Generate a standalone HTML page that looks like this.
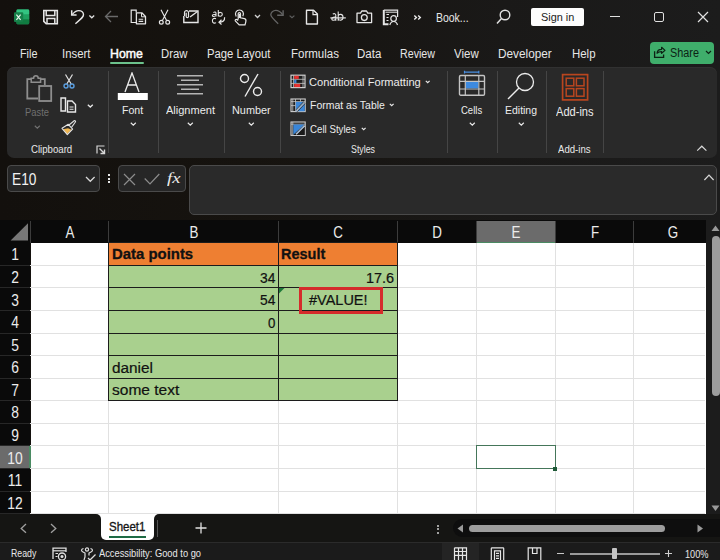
<!DOCTYPE html>
<html><head><meta charset="utf-8"><style>
html,body{margin:0;padding:0;}
body{width:720px;height:560px;overflow:hidden;position:relative;background:linear-gradient(to right,#13100d 0%,#16130f 35%,#1a1918 70%,#1c1c1c 100%);font-family:"Liberation Sans", sans-serif;}
.t{position:absolute;line-height:1;white-space:nowrap;}
.r{position:absolute;}
</style></head><body>
<svg class="r" style="left:13px;top:9px;" width="17" height="16" viewBox="0 0 17 16">
<rect x="3.5" y="0.5" width="12.7" height="14.8" rx="1.2" fill="#21a366"/>
<rect x="3.5" y="0.5" width="12.7" height="5" rx="1.2" fill="#33c481"/>
<rect x="9" y="5.5" width="7.2" height="4.8" fill="#1fa05f"/>
<rect x="3.5" y="10.3" width="12.7" height="5" rx="1.2" fill="#107c41"/>
<rect x="1" y="3.3" width="9.2" height="9.7" rx="1" fill="#17804a"/>
<path d="M3.4 5.6 L7.6 10.8 M7.6 5.6 L3.4 10.8" stroke="#e8f5ec" stroke-width="1.2"/>
</svg>
<svg class="r" style="left:42px;top:9px;" width="17" height="17" viewBox="0 0 17 17"><path d="M1.8 1.5 H15.3 V14.8 H4.2 L1.8 12.4 Z" fill="none" stroke="#e6e6e6" stroke-width="1.6"/>
<path d="M4.2 1.5 V6.6 H12.8 V1.5" fill="none" stroke="#e6e6e6" stroke-width="1.5"/>
<path d="M5 14.8 V9.6 H12.8 V14.8" fill="none" stroke="#e6e6e6" stroke-width="1.5"/></svg>
<svg class="r" style="left:66px;top:6px;" width="34" height="22" viewBox="0 0 34 22"><path d="M5.7 4.2 V9 H10.6" fill="none" stroke="#e6e6e6" stroke-width="1.5"/>
<path d="M6.2 8.6 C8.5 5.6 10.5 4.6 12.7 4.6 C15.5 4.6 17.5 6.6 17.5 8.8 C17.5 10.6 16.5 11.8 9.4 17.7" fill="none" stroke="#e6e6e6" stroke-width="1.4"/>
<path d="M23.4 9.6 L25.8 11.8 L28.2 9.6" fill="none" stroke="#e0e0e0" stroke-width="1.3"/></svg>
<svg class="r" style="left:104px;top:10px;" width="15" height="13" viewBox="0 0 15 13"><path d="M14 6.5 H1.5 M7 1 L1.5 6.5 L7 12" fill="none" stroke="#6a6a6a" stroke-width="1.3"/></svg>
<svg class="r" style="left:130px;top:9px;" width="17" height="17" viewBox="0 0 17 17"><path d="M6.2 13.5 H1.2 V1.2 H6.2 V3.5" fill="none" stroke="#e6e6e6" stroke-width="1.2"/>
<path d="M6.4 3.8 H11.8 L15.5 7.5 V14.8 H6.4 Z" fill="none" stroke="#e6e6e6" stroke-width="1.3" stroke-linejoin="round"/>
<path d="M11.5 4 V7.8 H15.3" fill="none" stroke="#e6e6e6" stroke-width="1"/>
<path d="M8.6 10.3 H13.2 M8.6 12.4 H13.2" stroke="#e6e6e6" stroke-width="1.1"/></svg>
<svg class="r" style="left:158px;top:9px;" width="13" height="16" viewBox="0 0 13 16"><path d="M3 0.8 L8.6 11.6 M10 0.8 L4.4 11.6" stroke="#e6e6e6" stroke-width="1.15"/>
<circle cx="3.3" cy="13.3" r="1.9" fill="none" stroke="#e6e6e6" stroke-width="1.2"/>
<circle cx="9.7" cy="13.3" r="1.9" fill="none" stroke="#e6e6e6" stroke-width="1.2"/></svg>
<svg class="r" style="left:182px;top:9px;" width="18" height="15" viewBox="0 0 18 15"><path d="M7 2 H16 V13.5 H1.8 V7" fill="none" stroke="#e6e6e6" stroke-width="1.4"/>
<path d="M8 8 L15.5 2.5" stroke="#e6e6e6" stroke-width="1.3"/>
<path d="M2.5 7 V3.5 C2.5 1 6.5 1 6.5 3.5 V7.5 C6.5 9 4.2 9 4.2 7.5 V3.8" fill="none" stroke="#e6e6e6" stroke-width="1.2"/></svg>
<svg class="r" style="left:210px;top:9px;" width="17" height="16" viewBox="0 0 17 16"><path d="M3.4 3.6 C4.6 2.6 6 3 6 4.3 V7.5 M6 5.5 C3 5.2 2.2 6 2.4 6.8 C2.6 7.8 4.8 7.8 6 6.5" fill="none" stroke="#e6e6e6" stroke-width="1.1"/>
<path d="M8.3 1 V7.5 M8.3 4.8 C8.8 3 12.3 2.8 12.3 5.2 C12.3 7.8 8.8 7.8 8.3 5.8" fill="none" stroke="#e6e6e6" stroke-width="1.1"/>
<path d="M6 9.8 C4.5 8.8 2.4 9.6 2.4 11.8 C2.4 14 4.5 14.6 6 13.6" fill="none" stroke="#e6e6e6" stroke-width="1.1"/>
<path d="M14.6 8.2 C14.8 11.5 13 13.2 9.2 13.2 M11.5 10.8 L9 13.2 L11.5 15.5" fill="none" stroke="#e6e6e6" stroke-width="1.2"/></svg>
<svg class="r" style="left:233px;top:9px;" width="15" height="17" viewBox="0 0 15 17"><path d="M3.2 7.5 C1.2 4 3.5 1 6.5 1 C9.5 1 11.5 4 9.8 7.2" fill="none" stroke="#e6e6e6" stroke-width="1.2"/>
<path d="M5.2 10.5 V4.6 C5.2 3.4 7.5 3.4 7.5 4.6 V8.8 L11.5 9.6 C13 10 13.2 11.2 12.8 12.8 L12 15.8 H6.2 L2.3 11.8 C1.8 11 2.8 10 3.8 10.6 L5.2 11.6" fill="none" stroke="#e6e6e6" stroke-width="1.2"/>
<path d="M6.4 5 V9" stroke="#e6e6e6" stroke-width="1.6"/></svg>
<svg class="r" style="left:254px;top:14px;" width="7" height="5" viewBox="0 0 7 5"><path d="M1 1 L3.5 3.5 L6 1" fill="none" stroke="#d0d0d0" stroke-width="1.3"/></svg>
<svg class="r" style="left:264px;top:6px;" width="34" height="22" viewBox="0 0 34 22"><path d="M19.1 4.2 V9.2 H13.2" fill="none" stroke="#646464" stroke-width="1.4"/>
<path d="M18.6 8.7 C16.5 5.6 14.2 4.4 11.8 4.4 C9 4.4 6.8 6.5 6.8 8.8 C6.8 10.6 7.8 11.8 14.2 17.7" fill="none" stroke="#646464" stroke-width="1.3"/>
<path d="M25.6 9.6 L28 11.8 L30.4 9.6" fill="none" stroke="#5e5e5e" stroke-width="1.2"/></svg>
<svg class="r" style="left:305px;top:9px;" width="14" height="17" viewBox="0 0 14 17"><path d="M1.5 1.2 H8.5 L12.4 5.1 V15 H1.5 Z" fill="none" stroke="#e6e6e6" stroke-width="1.4" stroke-linejoin="round"/>
<path d="M8 1.5 V5.6 H12" fill="none" stroke="#e6e6e6" stroke-width="1.2"/></svg>
<svg class="r" style="left:330px;top:11px;" width="17" height="12" viewBox="0 0 17 12"><path d="M2.8 3.2 C4 2.2 5.8 2.5 5.8 4 V9.8 M5.8 6.2 C2.5 6 1.6 7 1.8 8.2 C2 9.6 4.6 9.8 5.8 8" fill="none" stroke="#e6e6e6" stroke-width="1.1"/>
<path d="M8.2 0.5 V9.8 M8.2 5 C8.7 2.8 13 2.5 13 6.2 C13 9.9 8.7 9.9 8.2 7.5" fill="none" stroke="#e6e6e6" stroke-width="1.1"/>
<path d="M0.3 6.9 H15.8" stroke="#e6e6e6" stroke-width="1.2"/></svg>
<svg class="r" style="left:356px;top:10px;" width="17" height="14" viewBox="0 0 17 14"><path d="M1 3.2 H4.5 L5.8 1 H10.5 L11.8 3.2 H15.6 V12.6 H1 Z" fill="none" stroke="#e6e6e6" stroke-width="1.3" stroke-linejoin="round"/>
<circle cx="8.3" cy="7.6" r="2.9" fill="none" stroke="#e6e6e6" stroke-width="1.3"/></svg>
<svg class="r" style="left:382px;top:9px;" width="17" height="17" viewBox="0 0 17 17"><path d="M1.8 1.2 H15.6 V8" fill="none" stroke="#e6e6e6" stroke-width="1.2"/>
<path d="M1.8 1 V15.2 H6.5" fill="none" stroke="#e6e6e6" stroke-width="2"/>
<path d="M3.5 3.2 H15.6" stroke="#e6e6e6" stroke-width="1"/>
<path d="M4.5 5.5 H7 M4.5 8.5 H6.5 M4.5 11.5 H6.5" stroke="#e6e6e6" stroke-width="1.1"/>
<circle cx="11.6" cy="9.5" r="2.8" fill="none" stroke="#e6e6e6" stroke-width="1.2"/>
<path d="M7.8 16 C8.5 13.5 9.8 12.5 11.6 12.5 C13.4 12.5 14.8 13.5 15.5 16" fill="none" stroke="#e6e6e6" stroke-width="1.2"/></svg>
<svg class="r" style="left:413px;top:14px;" width="9" height="8" viewBox="0 0 9 8"><path d="M1.3 1.6 L3.4 3.6 L1.3 5.6 M5.2 1.6 L7.3 3.6 L5.2 5.6" fill="none" stroke="#ececec" stroke-width="1.4"/></svg>
<div class="t" style="left:436.00px;top:11.54px;font-size:12px;font-family:'Liberation Sans', sans-serif;color:#e6e6e6;font-weight:normal;transform:scaleX(0.8717);transform-origin:0 0;">Book...</div>
<svg class="r" style="left:496px;top:9px;" width="15" height="16" viewBox="0 0 15 16"><circle cx="9" cy="6" r="4.8" fill="none" stroke="#e0e0e0" stroke-width="1.4"/><path d="M5.5 9.5 L1 14.5" stroke="#e0e0e0" stroke-width="1.5"/></svg>
<div class="r" style="left:531px;top:8px;width:53px;height:18px;background:#fdfdfd;border-radius:2px;"></div>
<div class="t" style="left:540.70px;top:11.87px;font-size:11.5px;font-family:'Liberation Sans', sans-serif;color:#1b1b1b;font-weight:normal;transform:scaleX(0.9460);transform-origin:0 0;">Sign in</div>
<div class="r" style="left:610px;top:16px;width:10px;height:1px;background:#e0e0e0;"></div>
<div class="r" style="left:654px;top:12px;width:10px;height:10px;border:1.2px solid #e0e0e0;border-radius:2px;box-sizing:border-box;"></div>
<svg class="r" style="left:697px;top:11px;" width="12" height="12" viewBox="0 0 12 12"><path d="M1 1 L11 11 M11 1 L1 11" stroke="#e0e0e0" stroke-width="1.2"/></svg>
<div class="t" style="left:19.60px;top:47.52px;font-size:12.5px;font-family:'Liberation Sans', sans-serif;color:#e6e6e6;font-weight:normal;transform:scaleX(0.8657);transform-origin:0 0;">File</div>
<div class="t" style="left:62.00px;top:47.52px;font-size:12.5px;font-family:'Liberation Sans', sans-serif;color:#e6e6e6;font-weight:normal;transform:scaleX(0.9073);transform-origin:0 0;">Insert</div>
<div class="t" style="left:161.00px;top:47.52px;font-size:12.5px;font-family:'Liberation Sans', sans-serif;color:#e6e6e6;font-weight:normal;transform:scaleX(0.9041);transform-origin:0 0;">Draw</div>
<div class="t" style="left:207.00px;top:47.52px;font-size:12.5px;font-family:'Liberation Sans', sans-serif;color:#e6e6e6;font-weight:normal;transform:scaleX(0.9031);transform-origin:0 0;">Page Layout</div>
<div class="t" style="left:291.00px;top:47.52px;font-size:12.5px;font-family:'Liberation Sans', sans-serif;color:#e6e6e6;font-weight:normal;transform:scaleX(0.9213);transform-origin:0 0;">Formulas</div>
<div class="t" style="left:357.00px;top:47.52px;font-size:12.5px;font-family:'Liberation Sans', sans-serif;color:#e6e6e6;font-weight:normal;transform:scaleX(0.9208);transform-origin:0 0;">Data</div>
<div class="t" style="left:399.60px;top:47.52px;font-size:12.5px;font-family:'Liberation Sans', sans-serif;color:#e6e6e6;font-weight:normal;transform:scaleX(0.8540);transform-origin:0 0;">Review</div>
<div class="t" style="left:453.90px;top:47.52px;font-size:12.5px;font-family:'Liberation Sans', sans-serif;color:#e6e6e6;font-weight:normal;transform:scaleX(0.9182);transform-origin:0 0;">View</div>
<div class="t" style="left:497.90px;top:47.52px;font-size:12.5px;font-family:'Liberation Sans', sans-serif;color:#e6e6e6;font-weight:normal;transform:scaleX(0.9439);transform-origin:0 0;">Developer</div>
<div class="t" style="left:571.80px;top:47.52px;font-size:12.5px;font-family:'Liberation Sans', sans-serif;color:#e6e6e6;font-weight:normal;transform:scaleX(0.9144);transform-origin:0 0;">Help</div>
<div class="t" style="left:110.00px;top:47.52px;font-size:12.5px;font-family:'Liberation Sans', sans-serif;color:#ffffff;font-weight:normal;transform:scaleX(0.9850);transform-origin:0 0;-webkit-text-stroke:0.45px #ffffff;">Home</div>
<div class="r" style="left:110px;top:62px;width:34px;height:2px;background:#6cc28c;border-radius:1px;"></div>
<div class="r" style="left:650px;top:41.5px;width:64px;height:22px;background:#3fae6b;border-radius:4px;"></div>
<svg class="r" style="left:650px;top:42px;" width="25" height="20" viewBox="0 0 25 20"><path d="M4.6 9.3 V15.4 H13.6 V12.5" fill="none" stroke="#0c2214" stroke-width="1.3"/>
<path d="M7 11.2 C7.3 8.3 9.2 7.3 11.6 7.3 V5.3 L15 8.4 L11.6 11.3 V9.6 C9.6 9.6 8.2 10.1 7 11.2 Z" fill="none" stroke="#0c2214" stroke-width="1.2" stroke-linejoin="round"/></svg>
<div class="t" style="left:669.80px;top:47.22px;font-size:12.5px;font-family:'Liberation Sans', sans-serif;color:#0c2214;font-weight:normal;transform:scaleX(0.8683);transform-origin:0 0;">Share</div>
<svg class="r" style="left:704.5px;top:50px;" width="7" height="5" viewBox="0 0 7 5"><path d="M1 1 L3.5 3.5 L6 1" fill="none" stroke="#0c2214" stroke-width="1.2"/></svg>
<div class="r" style="left:7px;top:66.8px;width:710px;height:91.2px;background:#292929;border-radius:7px;box-shadow:inset 0 1px 0 #313131;"></div>
<svg class="r" style="left:25px;top:73px;" width="28" height="30" viewBox="0 0 28 30"><path d="M6 6.1 H2.3 V25.5 H13" fill="none" stroke="#8e8e8e" stroke-width="1.8"/>
<path d="M15.5 6.1 H19.8 V12" fill="none" stroke="#8e8e8e" stroke-width="1.8"/>
<path d="M6.2 9.3 V5.2 H8.6 C8.6 1.8 13.2 1.8 13.2 5.2 H15.6 V9.3 Z" fill="none" stroke="#8e8e8e" stroke-width="1.5"/>
<rect x="14.2" y="13" width="12" height="15" fill="none" stroke="#8e8e8e" stroke-width="1.8"/></svg>
<div class="t" style="left:24.80px;top:108.40px;font-size:10.4px;font-family:'Liberation Sans', sans-serif;color:#707070;font-weight:normal;transform:scaleX(0.9023);transform-origin:0 0;">Paste</div>
<svg class="r" style="left:33.6px;top:124.5px;" width="7" height="4" viewBox="0 0 7 4"><path d="M0.8 0.8 L3.3 3.1 L5.8 0.8" fill="none" stroke="#707070" stroke-width="1.2"/></svg>
<svg class="r" style="left:63px;top:74px;" width="12" height="15" viewBox="0 0 12 15"><path d="M2.5 0.5 L8.2 10 M9.5 0.5 L3.8 10" stroke="#e0e0e0" stroke-width="1.2"/>
<circle cx="3" cy="12" r="2" fill="none" stroke="#5a9ee0" stroke-width="1.4"/>
<circle cx="9" cy="12" r="2" fill="none" stroke="#5a9ee0" stroke-width="1.4"/></svg>
<svg class="r" style="left:60px;top:97px;" width="17" height="16" viewBox="0 0 17 16"><path d="M1 1 H5.5 V14 H1 Z" fill="none" stroke="#e8e8e8" stroke-width="1.4"/>
<path d="M7.5 4 H12 L15.5 7.5 V15 H7.5 Z" fill="none" stroke="#e8e8e8" stroke-width="1.4"/>
<path d="M9.5 10 H13.5 M9.5 12.3 H13.5" stroke="#e8e8e8" stroke-width="1.1"/></svg>
<svg class="r" style="left:87px;top:103.5px;" width="7" height="4" viewBox="0 0 7 4"><path d="M0.8 0.8 L3.3 3.1 L5.8 0.8" fill="none" stroke="#e8e8e8" stroke-width="1.3"/></svg>
<svg class="r" style="left:56px;top:115px;" width="25" height="25" viewBox="0 0 25 25"><path d="M7 14.2 L11.2 19 L15.6 14.8 L12 13.2 Z" fill="#f0b650"/>
<path d="M6 13.3 L12.3 9.3 L16.6 14.2 L11.3 19.7 Z" fill="none" stroke="#e6e6e6" stroke-width="1.1" stroke-linejoin="round"/>
<path d="M13 10 L18.2 5.8 C19 5.2 20 6.2 19.4 7 L15.5 12.4" fill="none" stroke="#e0e0e0" stroke-width="1.1"/></svg>
<div class="t" style="left:30.90px;top:144.84px;font-size:10px;font-family:'Liberation Sans', sans-serif;color:#e8e8e8;font-weight:normal;transform:scaleX(0.9626);transform-origin:0 0;">Clipboard</div>
<svg class="r" style="left:96px;top:145px;" width="10" height="10" viewBox="0 0 10 10"><path d="M1 8.5 V1 H8.5" fill="none" stroke="#d8d8d8" stroke-width="1.2"/>
<path d="M3.5 3.5 L8.5 8.5 M4.5 8.5 H8.5 V4.5" fill="none" stroke="#d8d8d8" stroke-width="1.4"/></svg>
<div class="r" style="left:107.7px;top:71px;width:1px;height:81.5px;background:#454545;"></div>
<div class="r" style="left:157.5px;top:71px;width:1px;height:81.5px;background:#454545;"></div>
<div class="r" style="left:223.5px;top:71px;width:1px;height:81.5px;background:#454545;"></div>
<div class="r" style="left:279.5px;top:71px;width:1px;height:81.5px;background:#454545;"></div>
<div class="r" style="left:446.8px;top:71px;width:1px;height:81.5px;background:#454545;"></div>
<div class="r" style="left:496.7px;top:71px;width:1px;height:81.5px;background:#454545;"></div>
<div class="r" style="left:546.3px;top:71px;width:1px;height:81.5px;background:#454545;"></div>
<div class="r" style="left:603.4px;top:71px;width:1px;height:81.5px;background:#454545;"></div>
<svg class="r" style="left:117px;top:72px;" width="31" height="29" viewBox="0 0 31 29"><path d="M8 20 L15 1 L22 20 M10.8 13 H19.2" fill="none" stroke="#ececec" stroke-width="1.3"/>
<rect x="0.8" y="21" width="30" height="7" fill="#ffffff"/></svg>
<div class="t" style="left:122.30px;top:104.81px;font-size:10.5px;font-family:'Liberation Sans', sans-serif;color:#ececec;font-weight:normal;transform:scaleX(1.0048);transform-origin:0 0;">Font</div>
<svg class="r" style="left:129.5px;top:121.9px;" width="7" height="4" viewBox="0 0 7 4"><path d="M0.8 0.8 L3.3 3.1 L5.8 0.8" fill="none" stroke="#e8e8e8" stroke-width="1.2"/></svg>
<svg class="r" style="left:176px;top:74px;" width="28" height="22" viewBox="0 0 28 22"><path d="M1 1.7 H27 M5 6.2 H23 M1 10.8 H27 M5 15.3 H23 M1 19.8 H27" stroke="#b4b4b4" stroke-width="1.6"/></svg>
<div class="t" style="left:165.70px;top:104.71px;font-size:10.5px;font-family:'Liberation Sans', sans-serif;color:#ececec;font-weight:normal;transform:scaleX(1.0493);transform-origin:0 0;">Alignment</div>
<svg class="r" style="left:187px;top:121.9px;" width="7" height="4" viewBox="0 0 7 4"><path d="M0.8 0.8 L3.3 3.1 L5.8 0.8" fill="none" stroke="#e8e8e8" stroke-width="1.2"/></svg>
<svg class="r" style="left:239px;top:73px;" width="25" height="25" viewBox="0 0 25 25"><circle cx="5.5" cy="5.5" r="4" fill="none" stroke="#ececec" stroke-width="1.4"/>
<circle cx="18.5" cy="18.5" r="4" fill="none" stroke="#ececec" stroke-width="1.4"/>
<path d="M19 1 L6 23.5" stroke="#ececec" stroke-width="1.4"/></svg>
<div class="t" style="left:231.60px;top:104.71px;font-size:10.5px;font-family:'Liberation Sans', sans-serif;color:#ececec;font-weight:normal;transform:scaleX(1.0349);transform-origin:0 0;">Number</div>
<svg class="r" style="left:248px;top:121.9px;" width="7" height="4" viewBox="0 0 7 4"><path d="M0.8 0.8 L3.3 3.1 L5.8 0.8" fill="none" stroke="#e8e8e8" stroke-width="1.2"/></svg>
<svg class="r" style="left:290px;top:74px;" width="16" height="15" viewBox="0 0 16 15"><rect x="1" y="1.2" width="14" height="12.4" fill="#1e1e1e" stroke="#d0d0d0" stroke-width="1.2"/>
<path d="M1 5.3 H15 M1 9.4 H15 M3.6 1.2 V13.6 M13 1.2 V13.6" stroke="#c8c8c8" stroke-width="0.8"/>
<rect x="4.2" y="1.8" width="4.6" height="3.1" fill="#e8312f"/>
<rect x="4.2" y="5.8" width="2.2" height="3.2" fill="#3a86d8"/>
<rect x="4.2" y="9.9" width="6" height="3.2" fill="#e8312f"/></svg>
<div class="t" style="left:309.10px;top:76.69px;font-size:11px;font-family:'Liberation Sans', sans-serif;color:#ececec;font-weight:normal;transform:scaleX(1.0099);transform-origin:0 0;">Conditional Formatting</div>
<svg class="r" style="left:425.2px;top:80px;" width="6" height="4" viewBox="0 0 6 4"><path d="M0.8 0.8 L2.7 2.7 L4.6 0.8" fill="none" stroke="#e8e8e8" stroke-width="1.2"/></svg>
<svg class="r" style="left:290px;top:98px;" width="16" height="15" viewBox="0 0 16 15"><rect x="1" y="1" width="14.2" height="12.6" fill="#1e1e1e" stroke="#d0d0d0" stroke-width="1.1"/>
<path d="M1 3.6 H15 M1 7.6 H5.5 M2.8 1 V13.6 M5.5 1 V13.6 M10.5 1 V3.6" stroke="#c8c8c8" stroke-width="0.8"/>
<path d="M5.8 3.9 H14.7 V13.3 H5.8 Z" fill="#3a86d8"/>
<path d="M6.5 12.8 L14.5 4.5" stroke="#1e1e1e" stroke-width="2.6"/>
<path d="M6.5 12.8 L14.5 4.5" stroke="#dcdcdc" stroke-width="1.5"/>
<path d="M7 12.3 L14 5" stroke="#3a86d8" stroke-width="0.6"/></svg>
<div class="t" style="left:309.80px;top:100.39px;font-size:11px;font-family:'Liberation Sans', sans-serif;color:#ececec;font-weight:normal;transform:scaleX(0.9517);transform-origin:0 0;">Format as Table</div>
<svg class="r" style="left:388.8px;top:103.4px;" width="6" height="4" viewBox="0 0 6 4"><path d="M0.8 0.8 L2.7 2.7 L4.6 0.8" fill="none" stroke="#e8e8e8" stroke-width="1.2"/></svg>
<svg class="r" style="left:290px;top:121px;" width="16" height="15" viewBox="0 0 16 15"><rect x="1" y="1" width="14.2" height="13.4" fill="#1e1e1e" stroke="#d0d0d0" stroke-width="1.1"/>
<path d="M1 3.2 H15 M2.8 1 V14.4" stroke="#c8c8c8" stroke-width="0.8"/>
<path d="M3.4 3.6 H14.6 L3.4 13.8 Z" fill="#3a86d8"/>
<path d="M3.6 13.9 L14.6 3.7 V13.9 Z" fill="#1a1a1a"/>
<path d="M6 13.2 L14.6 4.6" stroke="#dcdcdc" stroke-width="1.5"/>
<path d="M6.5 12.7 L14 5.1" stroke="#3a86d8" stroke-width="0.6"/></svg>
<div class="t" style="left:309.80px;top:123.99px;font-size:11px;font-family:'Liberation Sans', sans-serif;color:#ececec;font-weight:normal;transform:scaleX(0.8827);transform-origin:0 0;">Cell Styles</div>
<svg class="r" style="left:360.6px;top:127px;" width="6" height="4" viewBox="0 0 6 4"><path d="M0.8 0.8 L2.7 2.7 L4.6 0.8" fill="none" stroke="#e8e8e8" stroke-width="1.2"/></svg>
<div class="t" style="left:350.50px;top:144.84px;font-size:10px;font-family:'Liberation Sans', sans-serif;color:#e8e8e8;font-weight:normal;transform:scaleX(0.8824);transform-origin:0 0;">Styles</div>
<svg class="r" style="left:458px;top:70px;" width="28" height="27" viewBox="0 0 28 27"><path d="M6.5 2.2 H20.8 M6.5 0.8 V3.6 M20.8 0.8 V3.6" stroke="#4a90e2" stroke-width="1.2"/>
<rect x="1.5" y="5.5" width="25" height="19.7" rx="1.2" fill="none" stroke="#c4c4c4" stroke-width="1.4"/>
<path d="M1.5 11.3 H26.5 M1.5 19 H26.5 M7.3 5.5 V25.2 M20.8 5.5 V25.2" stroke="#c4c4c4" stroke-width="1.2"/>
<rect x="8" y="12" width="12.2" height="6.3" fill="#3d8ae0"/></svg>
<div class="t" style="left:461.10px;top:104.81px;font-size:10.5px;font-family:'Liberation Sans', sans-serif;color:#ececec;font-weight:normal;transform:scaleX(0.9056);transform-origin:0 0;">Cells</div>
<svg class="r" style="left:468.8px;top:121.9px;" width="7" height="4" viewBox="0 0 7 4"><path d="M0.8 0.8 L3.3 3.1 L5.8 0.8" fill="none" stroke="#e8e8e8" stroke-width="1.2"/></svg>
<svg class="r" style="left:507px;top:72px;" width="29" height="28" viewBox="0 0 29 28"><circle cx="18" cy="10" r="8.5" fill="none" stroke="#ececec" stroke-width="1.3"/>
<path d="M12 16 L1 27" stroke="#ececec" stroke-width="1.5"/></svg>
<div class="t" style="left:504.50px;top:104.81px;font-size:10.5px;font-family:'Liberation Sans', sans-serif;color:#ececec;font-weight:normal;transform:scaleX(0.9969);transform-origin:0 0;">Editing</div>
<svg class="r" style="left:518px;top:121.9px;" width="7" height="4" viewBox="0 0 7 4"><path d="M0.8 0.8 L3.3 3.1 L5.8 0.8" fill="none" stroke="#e8e8e8" stroke-width="1.2"/></svg>
<svg class="r" style="left:561px;top:73px;" width="28" height="28" viewBox="0 0 28 28"><rect x="1.6" y="1.6" width="25" height="25.3" fill="none" stroke="#b9461f" stroke-width="1.7"/>
<rect x="5.2" y="5.2" width="7.6" height="7.6" fill="none" stroke="#b9461f" stroke-width="1.5"/>
<rect x="15.4" y="5.2" width="7.6" height="7.6" fill="none" stroke="#b9461f" stroke-width="1.5"/>
<rect x="5.2" y="15.6" width="7.6" height="7.6" fill="none" stroke="#b9461f" stroke-width="1.5"/>
<rect x="15.4" y="15.6" width="7.6" height="7.6" fill="none" stroke="#b9461f" stroke-width="1.5"/></svg>
<div class="t" style="left:555.80px;top:106.83px;font-size:11.9px;font-family:'Liberation Sans', sans-serif;color:#ececec;font-weight:normal;transform:scaleX(0.9307);transform-origin:0 0;">Add-ins</div>
<div class="t" style="left:558.00px;top:144.84px;font-size:10px;font-family:'Liberation Sans', sans-serif;color:#e8e8e8;font-weight:normal;transform:scaleX(0.9617);transform-origin:0 0;">Add-ins</div>
<svg class="r" style="left:696px;top:145px;" width="12" height="7" viewBox="0 0 12 7"><path d="M1.2 5.6 L5.8 1.2 L10.4 5.6" fill="none" stroke="#d8d8d8" stroke-width="1.2"/></svg>
<div class="r" style="left:7px;top:165px;width:93px;height:27px;background:#262626;border:1px solid #4a4a4a;border-radius:4px;box-sizing:border-box;"></div>
<div class="t" style="left:12.00px;top:171.63px;font-size:15.8px;font-family:'Liberation Sans', sans-serif;color:#f2f2f2;font-weight:normal;transform:scaleX(0.8683);transform-origin:0 0;">E10</div>
<svg class="r" style="left:85px;top:176px;" width="11" height="7" viewBox="0 0 11 7"><path d="M1 1 L5.3 5.3 L9.6 1" fill="none" stroke="#d8d8d8" stroke-width="1.3"/></svg>
<div class="r" style="left:107.8px;top:174.3px;width:2.2px;height:2.2px;background:#e6e6e6;"></div>
<div class="r" style="left:107.8px;top:177.8px;width:2.2px;height:2.2px;background:#e6e6e6;"></div>
<div class="r" style="left:107.8px;top:181.3px;width:2.2px;height:2.2px;background:#e6e6e6;"></div>
<div class="r" style="left:118px;top:165px;width:67.5px;height:27px;background:#262626;border:1px solid #4a4a4a;border-radius:4px;box-sizing:border-box;"></div>
<svg class="r" style="left:123px;top:172.5px;" width="13" height="13" viewBox="0 0 13 13"><path d="M1 1 L12 12 M12 1 L1 12" stroke="#8c8c8c" stroke-width="1.2"/></svg>
<svg class="r" style="left:144px;top:172.5px;" width="16" height="12" viewBox="0 0 16 12"><path d="M0.7 5.5 L6 10.8 L15.3 1" fill="none" stroke="#8c8c8c" stroke-width="1.2"/></svg>
<div class="t" style="left:167.00px;top:170.48px;font-size:15.5px;font-family:'Liberation Serif', serif;color:#ececec;font-weight:normal;transform:scaleX(1.2054);transform-origin:0 0;font-style:italic;">fx</div>
<div class="r" style="left:189px;top:165px;width:528px;height:50px;background:#2a2a2a;border:1px solid #4a4a4a;border-radius:5px;box-sizing:border-box;"></div>
<svg class="r" style="left:703px;top:173.5px;" width="12" height="7" viewBox="0 0 12 7"><path d="M1.4 6 L6 1.2 L10.6 6" fill="none" stroke="#d8d8d8" stroke-width="1.2"/></svg>
<div class="r" style="left:0px;top:220px;width:706px;height:23px;background:#0a0a0a;"></div>
<div class="r" style="left:0px;top:242.8px;width:30px;height:272px;background:#0a0a0a;"></div>
<div class="r" style="left:30.5px;top:242.8px;width:675.5px;height:271.2px;background:#ffffff;"></div>
<svg class="r" style="left:9px;top:223px;" width="20" height="18" viewBox="0 0 20 18"><path d="M19 0.3 V17.6 H1.6 Z" fill="#777777"/></svg>
<div class="r" style="left:30px;top:221px;width:1px;height:21.5px;background:#3c3c3c;"></div>
<div class="r" style="left:108px;top:221px;width:1px;height:21.5px;background:#3c3c3c;"></div>
<div class="r" style="left:278px;top:221px;width:1px;height:21.5px;background:#3c3c3c;"></div>
<div class="r" style="left:397px;top:221px;width:1px;height:21.5px;background:#3c3c3c;"></div>
<div class="r" style="left:476px;top:221px;width:1px;height:21.5px;background:#3c3c3c;"></div>
<div class="r" style="left:555px;top:221px;width:1px;height:21.5px;background:#3c3c3c;"></div>
<div class="r" style="left:633px;top:221px;width:1px;height:21.5px;background:#3c3c3c;"></div>
<div class="r" style="left:476.5px;top:221px;width:78.5px;height:21.8px;background:#6b6b6b;"></div>
<div class="r" style="left:476.5px;top:241.5px;width:78.5px;height:1.3px;background:#4a8a62;"></div>
<div class="t" style="left:49.7px;width:40px;text-align:center;top:223.80px;font-size:16.3px;color:#ececec;transform:scaleX(0.82);">A</div>
<div class="t" style="left:173.7px;width:40px;text-align:center;top:223.80px;font-size:16.3px;color:#ececec;transform:scaleX(0.82);">B</div>
<div class="t" style="left:318.2px;width:40px;text-align:center;top:223.80px;font-size:16.3px;color:#ececec;transform:scaleX(0.82);">C</div>
<div class="t" style="left:417.2px;width:40px;text-align:center;top:223.80px;font-size:16.3px;color:#ececec;transform:scaleX(0.82);">D</div>
<div class="t" style="left:496.2px;width:40px;text-align:center;top:223.80px;font-size:16.3px;color:#ececec;transform:scaleX(0.82);">E</div>
<div class="t" style="left:574.7px;width:40px;text-align:center;top:223.80px;font-size:16.3px;color:#ececec;transform:scaleX(0.82);">F</div>
<div class="t" style="left:652.7px;width:40px;text-align:center;top:223.80px;font-size:16.3px;color:#ececec;transform:scaleX(0.82);">G</div>
<div class="r" style="left:30px;top:264.87px;width:675px;height:1px;background:#e1e1e1;"></div>
<div class="r" style="left:0px;top:264.87px;width:30px;height:1px;background:#272727;"></div>
<div class="r" style="left:30px;top:287.44px;width:675px;height:1px;background:#e1e1e1;"></div>
<div class="r" style="left:0px;top:287.44px;width:30px;height:1px;background:#272727;"></div>
<div class="r" style="left:30px;top:310.01px;width:675px;height:1px;background:#e1e1e1;"></div>
<div class="r" style="left:0px;top:310.01px;width:30px;height:1px;background:#272727;"></div>
<div class="r" style="left:30px;top:332.58000000000004px;width:675px;height:1px;background:#e1e1e1;"></div>
<div class="r" style="left:0px;top:332.58000000000004px;width:30px;height:1px;background:#272727;"></div>
<div class="r" style="left:30px;top:355.15px;width:675px;height:1px;background:#e1e1e1;"></div>
<div class="r" style="left:0px;top:355.15px;width:30px;height:1px;background:#272727;"></div>
<div class="r" style="left:30px;top:377.72px;width:675px;height:1px;background:#e1e1e1;"></div>
<div class="r" style="left:0px;top:377.72px;width:30px;height:1px;background:#272727;"></div>
<div class="r" style="left:30px;top:400.29px;width:675px;height:1px;background:#e1e1e1;"></div>
<div class="r" style="left:0px;top:400.29px;width:30px;height:1px;background:#272727;"></div>
<div class="r" style="left:30px;top:422.86px;width:675px;height:1px;background:#e1e1e1;"></div>
<div class="r" style="left:0px;top:422.86px;width:30px;height:1px;background:#272727;"></div>
<div class="r" style="left:30px;top:445.43px;width:675px;height:1px;background:#e1e1e1;"></div>
<div class="r" style="left:0px;top:445.43px;width:30px;height:1px;background:#272727;"></div>
<div class="r" style="left:30px;top:468.0px;width:675px;height:1px;background:#e1e1e1;"></div>
<div class="r" style="left:0px;top:468.0px;width:30px;height:1px;background:#272727;"></div>
<div class="r" style="left:30px;top:490.57000000000005px;width:675px;height:1px;background:#e1e1e1;"></div>
<div class="r" style="left:0px;top:490.57000000000005px;width:30px;height:1px;background:#272727;"></div>
<div class="r" style="left:30px;top:513.1400000000001px;width:675px;height:1px;background:#e1e1e1;"></div>
<div class="r" style="left:0px;top:513.1400000000001px;width:30px;height:1px;background:#272727;"></div>
<div class="r" style="left:108px;top:242.8px;width:1px;height:271px;background:#e1e1e1;"></div>
<div class="r" style="left:278px;top:242.8px;width:1px;height:271px;background:#e1e1e1;"></div>
<div class="r" style="left:397px;top:242.8px;width:1px;height:271px;background:#e1e1e1;"></div>
<div class="r" style="left:476px;top:242.8px;width:1px;height:271px;background:#e1e1e1;"></div>
<div class="r" style="left:555px;top:242.8px;width:1px;height:271px;background:#e1e1e1;"></div>
<div class="r" style="left:633px;top:242.8px;width:1px;height:271px;background:#e1e1e1;"></div>
<div class="r" style="left:0px;top:446.43px;width:29.5px;height:21.57px;background:#6b6b6b;"></div>
<div class="r" style="left:29px;top:446.43px;width:1.5px;height:21.57px;background:#4a8a62;"></div>
<div class="t" style="left:0.3px;width:30px;text-align:center;top:246.40px;font-size:16.3px;color:#ececec;transform:scaleX(0.85);">1</div>
<div class="t" style="left:0.3px;width:30px;text-align:center;top:268.97px;font-size:16.3px;color:#ececec;transform:scaleX(0.85);">2</div>
<div class="t" style="left:0.3px;width:30px;text-align:center;top:291.54px;font-size:16.3px;color:#ececec;transform:scaleX(0.85);">3</div>
<div class="t" style="left:0.3px;width:30px;text-align:center;top:314.11px;font-size:16.3px;color:#ececec;transform:scaleX(0.85);">4</div>
<div class="t" style="left:0.3px;width:30px;text-align:center;top:336.68px;font-size:16.3px;color:#ececec;transform:scaleX(0.85);">5</div>
<div class="t" style="left:0.3px;width:30px;text-align:center;top:359.25px;font-size:16.3px;color:#ececec;transform:scaleX(0.85);">6</div>
<div class="t" style="left:0.3px;width:30px;text-align:center;top:381.82px;font-size:16.3px;color:#ececec;transform:scaleX(0.85);">7</div>
<div class="t" style="left:0.3px;width:30px;text-align:center;top:404.39px;font-size:16.3px;color:#ececec;transform:scaleX(0.85);">8</div>
<div class="t" style="left:0.3px;width:30px;text-align:center;top:426.96px;font-size:16.3px;color:#ececec;transform:scaleX(0.85);">9</div>
<div class="t" style="left:0.3px;width:30px;text-align:center;top:449.53px;font-size:16.3px;color:#ececec;transform:scaleX(0.85);">10</div>
<div class="t" style="left:0.3px;width:30px;text-align:center;top:472.10px;font-size:16.3px;color:#ececec;transform:scaleX(0.85);">11</div>
<div class="t" style="left:0.3px;width:30px;text-align:center;top:494.67px;font-size:16.3px;color:#ececec;transform:scaleX(0.85);">12</div>
<div class="r" style="left:108px;top:242.8px;width:289.5px;height:22.57px;background:#ee7f32;"></div>
<div class="r" style="left:108px;top:265.37px;width:289.5px;height:135.42000000000002px;background:#a9d08e;"></div>
<div class="r" style="left:108px;top:242.3px;width:290px;height:1px;background:#1c1c1c;"></div>
<div class="r" style="left:108px;top:264.87px;width:290px;height:1px;background:#1c1c1c;"></div>
<div class="r" style="left:108px;top:287.44px;width:290px;height:1px;background:#1c1c1c;"></div>
<div class="r" style="left:108px;top:310.01px;width:290px;height:1px;background:#1c1c1c;"></div>
<div class="r" style="left:108px;top:332.58000000000004px;width:290px;height:1px;background:#1c1c1c;"></div>
<div class="r" style="left:108px;top:355.15px;width:290px;height:1px;background:#1c1c1c;"></div>
<div class="r" style="left:108px;top:377.72px;width:290px;height:1px;background:#1c1c1c;"></div>
<div class="r" style="left:108px;top:400.29px;width:290px;height:1px;background:#1c1c1c;"></div>
<div class="r" style="left:108px;top:242.8px;width:1px;height:158.49px;background:#1c1c1c;"></div>
<div class="r" style="left:278px;top:242.8px;width:1px;height:158.49px;background:#1c1c1c;"></div>
<div class="r" style="left:397px;top:242.8px;width:1px;height:158.49px;background:#1c1c1c;"></div>
<div class="t" style="left:111.90px;top:247.07px;font-size:14.8px;font-family:'Liberation Sans', sans-serif;color:#111;font-weight:bold;transform:scaleX(1.0074);transform-origin:0 0;-webkit-text-stroke:0.3px #111;">Data points</div>
<div class="t" style="left:281.40px;top:247.07px;font-size:14.8px;font-family:'Liberation Sans', sans-serif;color:#111;font-weight:bold;transform:scaleX(0.9801);transform-origin:0 0;-webkit-text-stroke:0.3px #111;">Result</div>
<div class="t" style="left:259.80px;top:270.65px;font-size:14px;font-family:'Liberation Sans', sans-serif;color:#111;font-weight:normal;transform:scaleX(0.9872);transform-origin:0 0;-webkit-text-stroke:0.2px #111;">34</div>
<div class="t" style="left:366.40px;top:270.75px;font-size:14px;font-family:'Liberation Sans', sans-serif;color:#111;font-weight:normal;transform:scaleX(1.0331);transform-origin:0 0;-webkit-text-stroke:0.2px #111;">17.6</div>
<div class="t" style="left:259.80px;top:293.25px;font-size:14px;font-family:'Liberation Sans', sans-serif;color:#111;font-weight:normal;transform:scaleX(0.9872);transform-origin:0 0;-webkit-text-stroke:0.2px #111;">54</div>
<div class="t" style="left:267.80px;top:315.85px;font-size:14px;font-family:'Liberation Sans', sans-serif;color:#111;font-weight:normal;transform:scaleX(0.9487);transform-origin:0 0;-webkit-text-stroke:0.2px #111;">0</div>
<div class="t" style="left:112.00px;top:360.75px;font-size:14px;font-family:'Liberation Sans', sans-serif;color:#111;font-weight:normal;transform:scaleX(1.0963);transform-origin:0 0;-webkit-text-stroke:0.2px #111;">daniel</div>
<div class="t" style="left:112.00px;top:383.35px;font-size:14px;font-family:'Liberation Sans', sans-serif;color:#111;font-weight:normal;transform:scaleX(1.1087);transform-origin:0 0;-webkit-text-stroke:0.2px #111;">some text</div>
<svg class="r" style="left:278.5px;top:287.8px;" width="6" height="6" viewBox="0 0 6 6"><path d="M0 0 H5.5 L0 5.5 Z" fill="#1e7a3a"/></svg>
<div class="t" style="left:309.00px;top:293.35px;font-size:14px;font-family:'Liberation Sans', sans-serif;color:#111;font-weight:normal;transform:scaleX(1.0354);transform-origin:0 0;-webkit-text-stroke:0.2px #111;">#VALUE!</div>
<div class="r" style="left:298.5px;top:286.5px;width:84px;height:27.5px;border:3px solid #d52b2b;box-sizing:border-box;"></div>
<div class="r" style="left:475.5px;top:445px;width:80px;height:24px;border:1.8px solid #45765a;box-sizing:border-box;"></div>
<div class="r" style="left:552.5px;top:466.5px;width:4.5px;height:4.5px;background:#1f5a38;"></div>
<div class="r" style="left:706px;top:220px;width:14px;height:294px;background:#1c1c1c;"></div>
<svg class="r" style="left:711px;top:225px;" width="9" height="7" viewBox="0 0 9 7"><path d="M0.5 6 L4.5 0.5 L8.5 6 Z" fill="#9a9a9a"/></svg>
<div class="r" style="left:711.5px;top:236px;width:8px;height:160px;background:#9d9d9d;border-radius:4px;"></div>
<svg class="r" style="left:711px;top:505px;" width="9" height="7" viewBox="0 0 9 7"><path d="M0.5 0.5 L4.5 6 L8.5 0.5 Z" fill="#9a9a9a"/></svg>
<div class="r" style="left:95px;top:514px;width:65px;height:8px;background:#ffffff;"></div>
<div class="r" style="left:0px;top:514px;width:101px;height:28px;background:#151513;border-top-right-radius:5px;"></div>
<div class="r" style="left:154px;top:514px;width:566px;height:28px;background:#151513;border-top-left-radius:5px;"></div>
<div class="r" style="left:101px;top:528px;width:53px;height:14px;background:#151513;"></div>
<svg class="r" style="left:20px;top:523px;" width="8" height="11" viewBox="0 0 8 11"><path d="M6 1 L1.2 5.4 L6 9.8" fill="none" stroke="#a0a0a0" stroke-width="1.3"/></svg>
<svg class="r" style="left:50px;top:523px;" width="8" height="11" viewBox="0 0 8 11"><path d="M1 1 L5.8 5.4 L1 9.8" fill="none" stroke="#a0a0a0" stroke-width="1.3"/></svg>
<div class="r" style="left:101px;top:514px;width:53px;height:26px;background:#ffffff;border-radius:0 0 5px 5px;"></div>
<div class="t" style="left:108.80px;top:519.69px;font-size:13.6px;font-family:'Liberation Sans', sans-serif;color:#141414;font-weight:normal;transform:scaleX(0.8445);transform-origin:0 0;-webkit-text-stroke:0.35px #141414;">Sheet1</div>
<div class="r" style="left:108.5px;top:535.5px;width:37px;height:2px;background:#1e6b45;"></div>
<div class="r" style="left:157px;top:520px;width:1px;height:17px;background:#555;"></div>
<svg class="r" style="left:195px;top:522px;" width="12" height="12" viewBox="0 0 12 12"><path d="M6 0.5 V11.5 M0.5 6 H11.5" stroke="#e0e0e0" stroke-width="1.3"/></svg>
<div class="r" style="left:437px;top:524.5px;width:2px;height:2px;background:#d0d0d0;border-radius:1px;"></div>
<div class="r" style="left:437px;top:528px;width:2px;height:2px;background:#d0d0d0;border-radius:1px;"></div>
<div class="r" style="left:437px;top:531.5px;width:2px;height:2px;background:#d0d0d0;border-radius:1px;"></div>
<div class="r" style="left:453px;top:519px;width:267px;height:18px;background:#0e0e0e;border-radius:9px 0 0 9px;"></div>
<svg class="r" style="left:457px;top:524px;" width="7" height="9" viewBox="0 0 7 9"><path d="M6 0.5 V8.5 L0.5 4.5 Z" fill="#9a9a9a"/></svg>
<div class="r" style="left:469px;top:524.5px;width:195.5px;height:7.5px;background:#9d9d9d;border-radius:4px;"></div>
<svg class="r" style="left:697px;top:524px;" width="7" height="9" viewBox="0 0 7 9"><path d="M0.5 0.5 V8.5 L6 4.5 Z" fill="#9a9a9a"/></svg>
<div class="r" style="left:0px;top:542px;width:720px;height:18px;background:#1b1b1b;border-top:1px solid #2b2b2b;box-sizing:border-box;"></div>
<div class="t" style="left:10.50px;top:548.47px;font-size:11.5px;font-family:'Liberation Sans', sans-serif;color:#e8e8e8;font-weight:normal;transform:scaleX(0.7628);transform-origin:0 0;">Ready</div>
<svg class="r" style="left:52px;top:547px;" width="16" height="13" viewBox="0 0 16 13"><path d="M1 12 V1.2 H14 V5" fill="none" stroke="#e0e0e0" stroke-width="1.3"/>
<path d="M1 3.8 H14" stroke="#e0e0e0" stroke-width="1.2"/>
<path d="M3.5 6.5 H6 M3.5 9.5 H5.5" stroke="#e0e0e0" stroke-width="1.1"/>
<circle cx="10" cy="9.6" r="3.6" fill="none" stroke="#e0e0e0" stroke-width="1.3"/>
<circle cx="10" cy="9.6" r="1.5" fill="#e0e0e0"/></svg>
<svg class="r" style="left:80px;top:547px;" width="17" height="13" viewBox="0 0 17 13"><circle cx="7" cy="2.5" r="1.6" fill="none" stroke="#e0e0e0" stroke-width="1.2"/>
<path d="M3.5 1.5 C1 2 1 4 3 5 L5 6 V10 L4 13 M10.5 1.5 C13 2 13 4 11 5 L9 6 V8.5" fill="none" stroke="#e0e0e0" stroke-width="1.2"/>
<path d="M8 11 L10 13 L15.5 7.5" fill="none" stroke="#e0e0e0" stroke-width="1.3"/></svg>
<div class="t" style="left:98.50px;top:548.47px;font-size:11.5px;font-family:'Liberation Sans', sans-serif;color:#e8e8e8;font-weight:normal;transform:scaleX(0.8102);transform-origin:0 0;">Accessibility: Good to go</div>
<div class="r" style="left:442px;top:543px;width:37px;height:17px;background:#242424;"></div>
<svg class="r" style="left:453px;top:547px;" width="15" height="13" viewBox="0 0 15 13"><path d="M1.5 0.8 H13.5 V13 M1.5 0.8 V13 M1.5 4.5 H13.5 M1.5 8.3 H13.5 M5.5 0.8 V13 M9.5 0.8 V13" fill="none" stroke="#e6e6e6" stroke-width="1.2"/></svg>
<svg class="r" style="left:490px;top:547px;" width="15" height="13" viewBox="0 0 15 13"><path d="M1.3 13 V1.5 Q1.3 0.8 2 0.8 H13 Q13.7 0.8 13.7 1.5 V13 M4.5 13 V3.8 H10.5 V13 M6 6.3 H9 M6 8.8 H9 M6 11.3 H9" fill="none" stroke="#e6e6e6" stroke-width="1.2"/></svg>
<svg class="r" style="left:527px;top:547px;" width="15" height="13" viewBox="0 0 15 13"><path d="M1.2 13 V0.8 H13.8 V13 M5.5 0.8 V6.5 H10 V0.8" fill="none" stroke="#e6e6e6" stroke-width="1.2"/></svg>
<div class="r" style="left:557px;top:553px;width:7px;height:1px;background:#c8c8c8;"></div>
<div class="r" style="left:570px;top:553px;width:90px;height:1.5px;background:#9a9a9a;"></div>
<div class="r" style="left:612px;top:548px;width:5px;height:11px;background:#c4c4c4;border-radius:1px;"></div>
<svg class="r" style="left:664px;top:549px;" width="9" height="9" viewBox="0 0 9 9"><path d="M4.5 1 V8 M1 4.5 H8" stroke="#d0d0d0" stroke-width="1.1"/></svg>
<div class="t" style="left:684.60px;top:548.89px;font-size:11px;font-family:'Liberation Sans', sans-serif;color:#e6e6e6;font-weight:normal;transform:scaleX(0.8363);transform-origin:0 0;">100%</div>
</body></html>
